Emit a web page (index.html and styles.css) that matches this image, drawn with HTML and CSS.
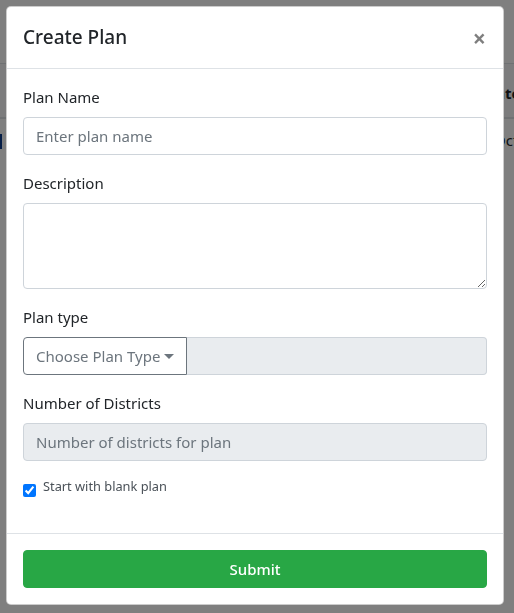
FILE: index.html
```html
<!DOCTYPE html>
<html lang="en">
<head>
    <meta charset="UTF-8" />
    <meta content="width=device-width, initial-scale=1.0" name="viewport" />
    <title>Create Plan</title>
    <link rel="stylesheet" href="styles.css">
</head>
<body>

<!-- Page behind the modal -->
<main class="page">
    <table class="plans-table">
        <thead>
            <tr><th class="col-name"></th><th class="col-date">Date</th></tr>
        </thead>
        <tbody>
            <tr><td class="col-name"><span class="row-mark"></span></td><td class="col-date">Oct 5</td></tr>
        </tbody>
    </table>
</main>

<div class="modal-backdrop"></div>

<div class="modal">
    <div class="modal-content">
        <div class="modal-header">
            <h5 class="modal-title">Create Plan</h5>
            <button class="close" type="button">&times;</button>
        </div>

        <form class="modal-body">
            <div class="form-group">
                <label for="planName">Plan Name</label>
                <input class="form-control" id="planName" type="text" placeholder="Enter plan name">
            </div>

            <div class="form-group">
                <label for="planDesc">Description</label>
                <textarea class="form-control" id="planDesc" rows="3"></textarea>
            </div>

            <div class="form-group">
                <label>Plan type</label>
                <div class="input-group">
                    <button class="btn-outline dropdown-toggle" type="button">Choose Plan Type</button>
                    <input class="form-control" type="text" disabled>
                </div>
            </div>

            <div class="form-group">
                <label for="numDistricts">Number of Districts</label>
                <input class="form-control" id="numDistricts" type="text" placeholder="Number of districts for plan" disabled>
            </div>

            <div class="form-group form-check">
                <input id="blankPlan" type="checkbox" checked>
                <label for="blankPlan">Start with blank plan</label>
            </div>
        </form>

        <div class="modal-footer">
            <button class="btn-submit" type="button">Submit</button>
        </div>
    </div>
</div>

</body>
</html>
```

FILE: styles.css
```css
* {
    box-sizing: border-box;
    margin: 0;
    padding: 0;
}

body {
    font-family: 'Noto Sans', 'Open Sans', sans-serif;
    font-size: 15px;
    line-height: 24px;
    color: #212529;
    background: #fff;
    overflow: hidden;
}

/* Page behind */
.page {
    padding-top: 63px;
}

.plans-table {
    width: 100%;
    border-collapse: collapse;
    table-layout: fixed;
    white-space: nowrap;
}

.plans-table th,
.plans-table td {
    padding: 12px 0;
    text-align: left;
    border-top: 1px solid #dee2e6;
    overflow: hidden;
}

.plans-table th {
    padding-top: 17px;
    border-bottom: 2px solid #dee2e6;
    background: #f8f9fa;
}

.plans-table td {
    padding-top: 9px;
}

.plans-table td.col-date {
    padding-left: 9px;
}

.col-name {
    width: 485px;
}

.col-date {
    width: 29px;
}

.row-mark {
    display: inline-block;
    width: 2px;
    height: 15px;
    vertical-align: middle;
    background: #0b3a8c;
}

.modal-backdrop {
    position: fixed;
    inset: 0;
    background: rgba(0, 0, 0, 0.5);
}

.modal {
    position: fixed;
    inset: 0;
    padding: 6px;
}

.modal-content {
    background: #fff;
    border: 1px solid rgba(0, 0, 0, 0.2);
    border-radius: 5px;
    width: 498px;
}

.modal-header {
    display: flex;
    align-items: flex-start;
    justify-content: space-between;
    padding: 15px 16px 16px;
    border-bottom: 1px solid #dee2e6;
}

.modal-title {
    font-size: 19px;
    font-weight: 500;
    line-height: 30px;
}

.close {
    background: none;
    border: none;
    font-family: 'Noto Sans', sans-serif;
    font-size: 23px;
    font-weight: 700;
    line-height: 1;
    color: #000;
    opacity: 0.5;
    padding: 5px 1px 0 0;
    cursor: pointer;
}

.modal-body {
    padding: 16px;
}

.form-group {
    margin-bottom: 16px;
}

.form-group > label {
    display: inline-block;
    margin-bottom: 8px;
}

.form-control {
    display: block;
    width: 100%;
    height: 38px;
    padding: 6px 12px;
    font-family: inherit;
    font-size: 15px;
    line-height: 24px;
    color: #495057;
    background: #fff;
    border: 1px solid #ced4da;
    border-radius: 4px;
}

.form-control::placeholder {
    color: #6c757d;
}

.form-control:disabled {
    background: #e9ecef;
}

textarea.form-control {
    height: 86px;
    resize: vertical;
}

.input-group {
    display: flex;
}

.input-group .form-control {
    flex: 1;
    border-left: none;
    border-radius: 0 4px 4px 0;
}

.btn-outline {
    flex: none;
    height: 38px;
    padding: 6px 12px;
    font-family: inherit;
    font-size: 15px;
    line-height: 24px;
    color: #6c757d;
    background: #fff;
    border: 1px solid #6c757d;
    border-radius: 4px 0 0 4px;
    cursor: pointer;
}

.dropdown-toggle::after {
    content: '';
    display: inline-block;
    margin-left: 4px;
    vertical-align: 3px;
    border-top: 5px solid;
    border-right: 5px solid transparent;
    border-left: 5px solid transparent;
}

.form-check {
    display: flex;
    align-items: center;
    height: 24px;
    padding-top: 2px;
}

.form-check input {
    width: 13px;
    height: 13px;
    margin: 0 7px 0 0;
    accent-color: #0075ff;
}

.form-check label {
    font-size: 12.8px;
    color: #495057;
}

.modal-footer {
    padding: 16px;
    border-top: 1px solid #dee2e6;
}

.btn-submit {
    display: block;
    width: 100%;
    height: 38px;
    font-family: inherit;
    font-size: 15px;
    font-weight: 500;
    color: #fff;
    background: #28a745;
    border: 1px solid #28a745;
    border-radius: 4px;
    cursor: pointer;
}
```
